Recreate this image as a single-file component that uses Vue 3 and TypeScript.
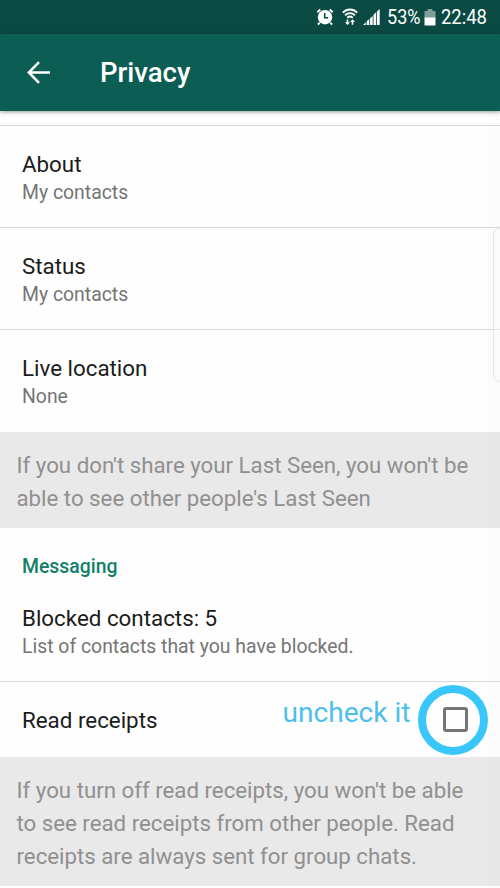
<script setup lang="ts">
interface Setting {
  title: string
  value: string
}

const visibility: Setting[] = [
  { title: 'About', value: 'My contacts' },
  { title: 'Status', value: 'My contacts' },
  { title: 'Live location', value: 'None' },
]
const lastSeenNote: string[] = [
  "If you don't share your Last Seen, you won't be",
  "able to see other people's Last Seen",
]
const receiptsNote: string[] = [
  "If you turn off read receipts, you won't be able",
  'to see read receipts from other people. Read',
  'receipts are always sent for group chats.',
]
</script>

<template>
  <div class="screen">
    <div class="status">
      <svg class="alarm" width="18" height="18" viewBox="0 0 18 18">
        <circle cx="9" cy="9.2" r="7.2" fill="#fff" />
        <path d="M1.300 4.200 4.300 1.500M16.700 4.200 13.700 1.500M3.600 14.600 2 16.600M14.400 14.600 16 16.600" stroke="#fff" stroke-width="1.9" fill="none" />
        <path d="M8.700 5v4.800h3.500" stroke="#0a4a43" stroke-width="1.5" fill="none" />
      </svg>
      <svg class="wifi" width="16" height="18" viewBox="0 0 16 18">
        <g fill="none" stroke="#fff" stroke-width="1.9">
          <path d="M.8 4.600C5 .5 11 .5 15.200 4.600" />
          <path d="M3.100 7.200C6 4.500 10 4.500 12.900 7.200" />
          <path d="M5.300 9.800C7 8.300 9 8.300 10.700 9.800" />
        </g>
        <path d="M5.500 17 3 14.200h1.700v-2.700h1.600v2.700H8zM10.500 11.200 13 14h-1.700v2.700H9.700V14H8z" fill="#fff" />
      </svg>
      <svg class="signal" width="17" height="17" viewBox="0 0 17 17" fill="#fff">
        <path d="M0 16 2.800 13.200V16zM3.700 12.200l2.600-2.100V16H3.700zM7.100 9.200l2.600-2.200V16H7.100zM10.500 5.800l2.600-2.500V16h-2.600zM13.900 2.500 16.700 0v16h-2.800z" />
      </svg>
      <span class="percent">53%</span>
      <svg class="battery" width="12" height="17" viewBox="0 0 12 17">
        <path d="M3.500 0h5v2H11.500v7H.5V2h3z" fill="#7f9f9b" />
        <path d="M.5 8.500h11V16.500H.5z" fill="#fff" />
      </svg>
      <span class="clock">22:48</span>
    </div>
    <header class="bar">
      <svg width="24" height="24" viewBox="0 0 24 24">
        <path d="M23 11.500H2M12 1.100 1.800 11.500 12 21.900" fill="none" stroke="#fff" stroke-width="2.500" />
      </svg>
      <h1>Privacy</h1>
    </header>
    <main>
      <div class="gap"></div>
      <section v-for="s in visibility" :key="s.title" class="row">
        <div class="title">{{ s.title }}</div>
        <div class="sub">{{ s.value }}</div>
      </section>
      <div class="note">
        <div v-for="line in lastSeenNote" :key="line">{{ line }}</div>
      </div>
      <h2>Messaging</h2>
      <section class="blocked">
        <div class="title">Blocked contacts: 5</div>
        <div class="sub">List of contacts that you have blocked.</div>
      </section>
      <section class="receipts">
        <div class="title">Read receipts</div>
        <span class="hint">uncheck it</span>
        <span class="ring"><span class="box"></span></span>
      </section>
      <div class="note last">
        <div v-for="line in receiptsNote" :key="line">{{ line }}</div>
      </div>
    </main>
    <div class="edge"></div>
    <div class="handle"></div>
  </div>
</template>

<style>
body {
  background: #fefefe;
}
</style>

<style scoped>
.screen {
  position: relative;
  width: 500px;
  height: 888px;
  overflow: hidden;
  background: #fefefe;
  font-family: Roboto, sans-serif;
  color: #1b1b1b;
}
.status {
  display: flex;
  height: 34px;
  box-sizing: border-box;
  padding-left: 316px;
  align-items: center;
  background: #0a4a43;
  color: #fff;
  font-size: 20.5px;
  white-space: nowrap;
}
.alarm {
  margin-right: 8px;
}
.wifi {
  margin-right: 5px;
}
.signal {
  margin-right: 7px;
}
.percent {
  width: 37px;
  transform: scaleX(0.88);
  transform-origin: left;
}
.clock {
  margin-left: 5px;
  transform: scaleX(0.9);
  transform-origin: left;
}
.bar {
  position: relative;
  display: flex;
  height: 77px;
  align-items: center;
  padding-left: 27px;
  background: #0c5e54;
  box-shadow: 0 1px 4px rgba(0, 0, 0, 0.4);
}
h1 {
  margin: 1px 0 0 49px;
  color: #fff;
  font-size: 27.5px;
  font-weight: 500;
  line-height: 32px;
}
.gap {
  height: 14px;
}
.row {
  height: 102px;
  box-sizing: border-box;
  padding: 23px 22px 0;
  border-top: 1px solid #d9d9d9;
}
.title {
  font-size: 22.35px;
  line-height: 30px;
}
.sub {
  margin-top: 1px;
  color: #757575;
  font-size: 19.4px;
  line-height: 26px;
}
.note {
  height: 96px;
  margin-top: 1px;
  box-sizing: border-box;
  padding: 17px 16.5px 0;
  background: #e9e9e9;
  color: #909090;
  font-size: 22.25px;
  line-height: 33px;
  white-space: nowrap;
}
h2 {
  margin: 0;
  height: 75px;
  box-sizing: border-box;
  padding: 26px 22px 0;
  color: #128069;
  font-size: 19.4px;
  font-weight: 500;
  line-height: 26px;
}
.blocked {
  height: 78px;
  padding: 0 22px;
}
.receipts {
  display: flex;
  height: 76px;
  box-sizing: border-box;
  align-items: center;
  padding: 0 12.5px 0 22px;
  border-top: 1px solid #d9d9d9;
}
.hint {
  margin: 0 7px 13px auto;
  color: #4fbfeb;
  font-size: 28.1px;
  line-height: 32px;
}
.ring {
  display: flex;
  width: 54px;
  height: 54px;
  border: 8px solid #39c6fa;
  border-radius: 50%;
  align-items: center;
  justify-content: center;
}
.box {
  width: 19px;
  height: 19px;
  margin-left: 6px;
  border: 3px solid #757575;
  border-radius: 3px;
}
.last {
  height: 129px;
  margin-top: 0;
}
.edge {
  position: absolute;
  top: 112px;
  right: 0;
  width: 12px;
  height: 776px;
  background: rgba(0, 0, 0, 0.008);
}
.handle {
  position: absolute;
  top: 228px;
  right: -9px;
  width: 14px;
  height: 152px;
  border: 1px solid #e4e4e4;
  border-radius: 7px;
  background: rgba(250, 250, 250, 0.45);
}
</style>
